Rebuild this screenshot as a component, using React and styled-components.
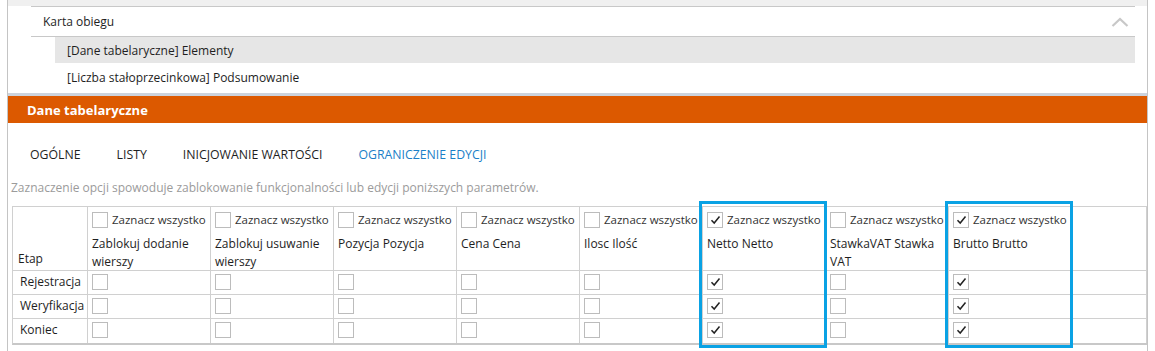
import React from 'react'
import styled, { createGlobalStyle } from 'styled-components'

const Global = createGlobalStyle`
  body {
    margin: 0;
    background: #fff;
    font-family: "Open Sans", "Noto Sans", sans-serif;
    color: #1e1e1e;
  }
`

const Panel = styled.div`
  margin-left: 7px;
  width: 1139px;
  height: 351px;
  border-left: 1px solid #c4c4c4;
  border-right: 1px solid #c4c4c4;
  overflow: hidden;
`

const TopStrip = styled.div`
  height: 6px;
  background: #f0f0f0;
`

const Tree = styled.div`
  border-top: 1px solid #c8c8c8;
  margin: 0 12px 0 23px;
`

const TreeRow = styled.div`
  display: flex;
  align-items: center;
  justify-content: space-between;
  height: ${p => p.h || 27}px;
  margin-left: ${p => p.indent ? 24 : 0}px;
  padding-left: 12px;
  padding-right: 6px;
  font-size: 12px;
  background: ${p => p.selected ? '#e6e6e6' : 'transparent'};
  border-bottom: ${p => p.divider ? '1px solid #c8c8c8' : 'none'};
`

const Chevron = styled.svg`
  width: 18px;
  height: 10px;
`

const Separator = styled.div`
  height: 3px;
  margin-top: 2px;
  background: #ccd3dd;
`

const Header = styled.div`
  height: 27px;
  background: #dc5900;
  color: #fff;
  font-weight: 700;
  font-size: 13px;
  display: flex;
  align-items: center;
  padding-left: 19px;
`

const Tabs = styled.div`
  display: flex;
  gap: 36px;
  padding: 19px 0 0 22px;
  height: 25px;
  align-items: center;
`

const Tab = styled.div`
  font-size: 12.3px;
  color: ${p => p.active ? '#1a7fc8' : '#1e1e1e'};
`

const Hint = styled.div`
  font-size: 12px;
  color: #9b9b9b;
  padding: 12px 0 0 3px;
  height: 18px;
`

const TableWrap = styled.div`
  position: relative;
  margin: 9px 0 0 4px;
`

const Grid = styled.div`
  display: grid;
  grid-template-columns: 75px repeat(8, 123px) 1fr;
  grid-template-rows: 64px repeat(3, 24px);
  border-top: 1px solid #d0d0d0;
  border-left: 1px solid #d0d0d0;
  border-bottom: 2px solid #c8c8c8;
`

const Cell = styled.div`
  border-right: 1px solid #d0d0d0;
  border-bottom: ${p => p.last ? 'none' : '1px solid #d0d0d0'};
  font-size: 12px;
  display: flex;
  flex-direction: column;
  justify-content: ${p => p.bottom ? 'flex-end' : 'flex-start'};
  padding: ${p => p.pad || '0 0 0 4px'};
  line-height: 18px;
  box-sizing: border-box;
`

const CheckRow = styled.div`
  display: flex;
  align-items: center;
  gap: 4px;
  font-size: 11.5px;
  color: #333;
  margin-top: 4px;
  white-space: nowrap;
`

const Title = styled.div`
  margin-top: 6px;
  line-height: 18px;
`

const Box = styled.div`
  width: 16px;
  height: 16px;
  box-sizing: border-box;
  border: 1px solid #bcbcbc;
  background: #fff;
  display: flex;
  align-items: center;
  justify-content: center;
  margin-top: ${p => p.mt || 0}px;
  flex-shrink: 0;
`

const Highlight = styled.div`
  position: absolute;
  top: -5px;
  bottom: -3px;
  width: 128px;
  border: 3px solid #0aa2e4;
  box-sizing: border-box;
  pointer-events: none;
`

const Tick = () => (
  <svg width="11" height="10" viewBox="0 0 11 10">
    <path d="M1.5 5.2 L4.2 8 L9.5 1.5" fill="none" stroke="#222" strokeWidth="1.5" />
  </svg>
)

const columns = [
  { title: 'Zablokuj dodanie wierszy', on: false },
  { title: 'Zablokuj usuwanie wierszy', on: false },
  { title: 'Pozycja Pozycja', on: false },
  { title: 'Cena Cena', on: false },
  { title: 'Ilosc Ilość', on: false },
  { title: 'Netto Netto', on: true },
  { title: 'StawkaVAT Stawka VAT', on: false },
  { title: 'Brutto Brutto', on: true },
]

const stages = ['Rejestracja', 'Weryfikacja', 'Koniec']

export default function App() {
  return (
    <>
      <Global />
      <Panel>
        <TopStrip />
        <Tree>
          <TreeRow h={29} divider>
            <span>Karta obiegu</span>
            <Chevron viewBox="0 0 18 10">
              <path d="M1.5 9 L9 2 L16.5 9" fill="none" stroke="#c8c8c8" strokeWidth="2.2" />
            </Chevron>
          </TreeRow>
          <TreeRow indent selected h={26}>[Dane tabelaryczne] Elementy</TreeRow>
          <TreeRow indent h={28}>[Liczba stałoprzecinkowa] Podsumowanie</TreeRow>
        </Tree>
        <Separator />
        <Header>Dane tabelaryczne</Header>
        <Tabs>
          <Tab>OGÓLNE</Tab>
          <Tab>LISTY</Tab>
          <Tab>INICJOWANIE WARTOŚCI</Tab>
          <Tab active>OGRANICZENIE EDYCJI</Tab>
        </Tabs>
        <Hint>Zaznaczenie opcji spowoduje zablokowanie funkcjonalności lub edycji poniższych parametrów.</Hint>
        <TableWrap>
          <Grid>
            <Cell bottom pad="0 0 2px 5px">Etap</Cell>
            {columns.map(c => (
              <Cell key={c.title}>
                <CheckRow>
                  <Box>{c.on && <Tick />}</Box>
                  Zaznacz wszystko
                </CheckRow>
                <Title>{c.title}</Title>
              </Cell>
            ))}
            <Cell />
            {stages.map((s, i) => (
              <React.Fragment key={s}>
                <Cell last={i === 2} pad="2px 0 0 7px">{s}</Cell>
                {columns.map(c => (
                  <Cell key={c.title} last={i === 2}>
                    <Box mt={3}>{c.on && <Tick />}</Box>
                  </Cell>
                ))}
                <Cell last={i === 2} />
              </React.Fragment>
            ))}
          </Grid>
          <Highlight style={{ left: 75 + 5 * 123 - 3 }} />
          <Highlight style={{ left: 75 + 7 * 123 - 3 }} />
        </TableWrap>
      </Panel>
    </>
  )
}
